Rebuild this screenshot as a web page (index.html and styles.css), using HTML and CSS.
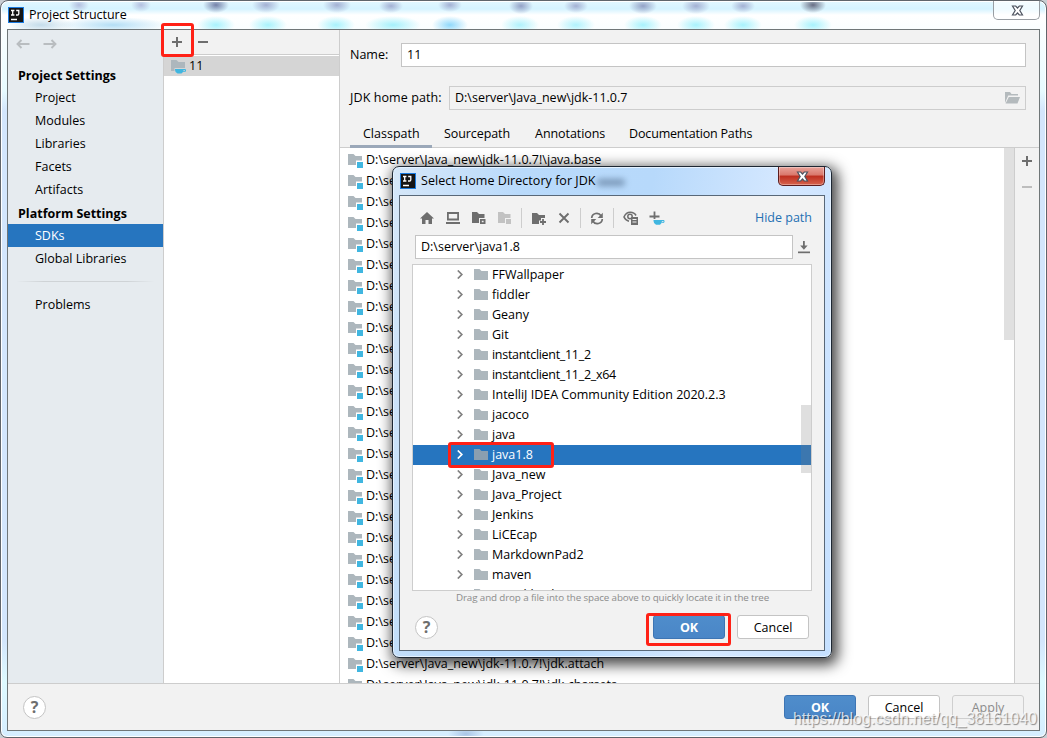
FILE: index.html
```html
<!DOCTYPE html>
<html lang="en">
<head>
<meta charset="utf-8">
<title>Project Structure</title>
<link rel="stylesheet" href="styles.css">
</head>
<body>
<svg class="defs" width="0" height="0">
  <symbol id="i-ij" viewBox="0 0 16 16"><rect width="16" height="16" fill="#1a7be0"/><rect x="1" y="1" width="14" height="14" fill="#151515"/><path d="M3 3.500h3.400M4.700 3.500v4.500M3 8h3.400M8.200 3.500h2.600v3.300q0 1.200-1.200 1.200H8M3 12.500h6" fill="none" stroke="#fff" stroke-width="1.300"/></symbol>
  <symbol id="i-back" viewBox="0 0 14 10"><path d="M13.500 5H1.500M5.500 1L1.500 5l4 4" fill="none" stroke="#b9bdc0" stroke-width="1.900"/></symbol>
  <symbol id="i-fwd" viewBox="0 0 14 10"><path d="M.5 5h12M8.500 1l4 4-4 4" fill="none" stroke="#b9bdc0" stroke-width="1.900"/></symbol>
  <symbol id="i-folder" viewBox="0 0 14 11"><path d="M0 0h5.500l2 2H14v9H0z"/></symbol>
  <symbol id="i-jar" viewBox="0 0 15 14"><path d="M0 0h5.500l2 2H14v4.500H8V11H0z" fill="#adb7bd"/><path d="M9 8h6v6H9z" fill="#40b6e0"/></symbol>
  <symbol id="i-sdk" viewBox="0 0 16 14"><path d="M0 0h5.500l2 2H14v6H3.500v3H0z" fill="#adb7bd"/><path d="M4 9h8.500v1q0 2.500-2 3.500H6.500Q4 12.500 4 10z" fill="#40b6e0"/><path d="M12 9.500h2.500v1.800H12" fill="none" stroke="#40b6e0"/></symbol>
  <symbol id="i-open" viewBox="0 0 15 12"><path d="M0 11V0h5l1.500 2H13v1.500H3.200z" fill="#b4babd"/><path d="M3.800 5H15l-2.500 6.500H.6z" fill="#b4babd"/></symbol>
  <symbol id="i-chev" viewBox="0 0 6 9"><path d="M.8.5l4 4-4 4" fill="none" stroke="currentColor" stroke-width="1.700"/></symbol>
  <symbol id="i-close" viewBox="0 0 13 11"><path d="M1.500 1h3.200l1.800 2 1.800-2h3.200L8.800 5.500l2.700 4.500H8.300L6.500 8 4.700 10H1.500l2.700-4.500z" fill="#fff" stroke="#4d535f" stroke-width="1.200"/></symbol>
</svg>
<div class="window">
  <header class="titlebar">
    <span class="title"><svg width="16" height="16"><use href="#i-ij"/></svg>Project Structure</span>
    <span class="close"><svg width="13" height="11"><use href="#i-close"/></svg></span>
  </header>
  <div class="frame">
    <div class="columns">
      <nav class="sidebar">
        <div class="history"><svg width="14" height="10"><use href="#i-back"/></svg><svg width="14" height="10"><use href="#i-fwd"/></svg></div>
        <h2 class="group">Project Settings</h2>
        <a class="item">Project</a><a class="item">Modules</a><a class="item">Libraries</a><a class="item">Facets</a><a class="item">Artifacts</a>
        <h2 class="group">Platform Settings</h2>
        <a class="item selected">SDKs</a><a class="item">Global Libraries</a>
        <div class="rule"></div>
        <a class="item">Problems</a>
      </nav>
      <section class="sdks">
        <div class="sdk-tools"><span class="plus"></span><span class="minus"></span><i class="mark mark-add"></i></div>
        <div class="sdk"><svg width="16" height="14"><use href="#i-sdk"/></svg>11</div>
      </section>
      <main class="detail">
        <div class="field-row name-row"><label>Name:</label><div class="input">11</div></div>
        <div class="field-row path-row"><label>JDK home path:</label><div class="input disabled"><span>D:\server\Java_new\jdk-11.0.7</span><svg width="15" height="12"><use href="#i-open"/></svg></div></div>
        <div class="tabs"><span class="tab active">Classpath</span><span class="tab">Sourcepath</span><span class="tab annotations">Annotations</span><span class="tab doc">Documentation Paths</span></div>
        <div class="roots">
          <div class="jars" id="jars"></div>
          <div class="track"><div class="thumb"></div></div>
          <div class="side-tools"><span class="plus"></span><span class="minus off"></span></div>
        </div>
      </main>
    </div>
    <footer class="footer"><span class="help">?</span><span class="btn primary">OK</span><span class="btn">Cancel</span><span class="btn off">Apply</span></footer>
  </div>
</div>

<div class="dialog">
  <header class="dialog-title">
    <span class="title"><svg width="16" height="16"><use href="#i-ij"/></svg>Select Home Directory for JDK</span><span class="ghost"></span>
    <span class="close red"><svg width="13" height="11"><use href="#i-close"/></svg></span>
  </header>
  <div class="dialog-body">
    <div class="tools">
      <svg width="14" height="12" viewBox="0 0 14 12"><path d="M7 0l7 6.500h-2V12H8.500V8h-3v4H2V6.500H0z" fill="#6e6e6e"/></svg>
      <svg class="g3" width="14" height="12" viewBox="0 0 14 12"><path d="M1.900 1h10.200v6.500H1.900z" fill="none" stroke="#6e6e6e" stroke-width="1.800"/><path d="M0 10h14v2H0z" fill="#6e6e6e"/></svg>
      <svg class="g3" width="14" height="12" viewBox="0 0 14 12"><path d="M0 0h5l2 2h5.500v4H7v5H0z" fill="#6e6e6e"/><path d="M8 7h5.500v5H8zm1.800 1.800v1.500h1.800V8.800z" fill="#6e6e6e" fill-rule="evenodd"/></svg>
      <svg class="g3" width="14" height="12" viewBox="0 0 14 12"><path d="M0 0h5l2 2h5.500v4H7v5H0z" fill="#c2c2c2"/><path d="M8 7h5v5H8z" fill="#c2c2c2"/></svg>
      <i class="sep"></i>
      <svg class="g1" width="15" height="13" viewBox="0 0 15 13"><path d="M0 1h5l2 2h6v3H9v2.500H7V12H0z" fill="#6e6e6e"/><path d="M11 7v6M8 10h6" stroke="#6e6e6e" stroke-width="1.800"/></svg>
      <svg class="g2" width="12" height="12" viewBox="0 0 12 12"><path d="M1.500 1.500l9 9m0-9l-9 9" stroke="#6e6e6e" stroke-width="1.900"/></svg>
      <i class="sep g1"></i>
      <svg width="14" height="13" viewBox="0 0 14 13"><path d="M1.700 6a5 5 0 0 1 9.300-2.200M12.300 7A5 5 0 0 1 3 9.200" fill="none" stroke="#6e6e6e" stroke-width="1.700"/><path d="M12.800.8V6H7.700zM1.200 12.200V7h5.100z" fill="#6e6e6e"/></svg>
      <i class="sep"></i>
      <svg width="16" height="14" viewBox="0 0 16 14"><path d="M6 10.200Q2.500 9.500 1 6 3 1.300 7.300 1.300q4 0 5.700 3.200" fill="none" stroke="#6e6e6e" stroke-width="1.600"/><circle cx="7" cy="5.500" r="2.200" fill="none" stroke="#6e6e6e" stroke-width="1.500"/><path d="M8 6h7v8H8z" fill="#6e6e6e"/><path d="M9.500 8.500h4m-4 2.500h4" stroke="#f2f2f2"/></svg>
      <svg class="g1" width="16" height="14" viewBox="0 0 16 14"><path d="M5.500.5v7.500M.5 5.500h10" stroke="#6e6e6e" stroke-width="1.800"/><path d="M4.500 9H13v1q0 2.500-2 3.700H7Q4.500 12.500 4.500 10z" fill="#40b6e0"/><path d="M12.500 9.500H15v1.800h-2.500" fill="none" stroke="#40b6e0"/></svg>
      <a class="hide">Hide path</a>
    </div>
    <div class="path"><div class="input">D:\server\java1.8</div><svg width="12" height="13" viewBox="0 0 12 13"><path d="M5.900 0v7" stroke="#6e6e6e" stroke-width="1.800"/><path d="M2.200 4.500h7.400L5.900 8.800z" fill="#6e6e6e"/><path d="M0 10.500h12v1.700H0z" fill="#6e6e6e"/></svg></div>
    <div class="tree"><div id="tree"></div><div class="tree-thumb"></div><i class="mark mark-java"></i></div>
    <p class="hint">Drag and drop a file into the space above to quickly locate it in the tree</p>
    <div class="actions"><span class="help">?</span><span class="btn primary">OK<i class="mark mark-ok"></i></span><span class="btn">Cancel</span></div>
  </div>
</div>
<div class="watermark">https://blog.csdn.net/qq_38161040</div>
<script src="app.js"></script>
</body>
</html>
```
FILE: styles.css
```css
* { box-sizing: border-box; }
body { margin: 0; width: 1047px; height: 738px; overflow: hidden; position: relative; background: #c9ced3; font: 12.5px/20px "Open Sans", "Noto Sans", sans-serif; color: #000; }
svg { display: block; flex: none; }
.defs { position: absolute; }

.window { width: 1047px; height: 738px; border: 1px solid #60656b; border-radius: 8px 8px 7px 7px; padding: 0 6px; box-shadow: inset 0 0 0 1px #fff;
  background:
    radial-gradient(ellipse 13px 8px at 215px 4px, #7481a8, transparent),
    radial-gradient(ellipse 10px 7px at 78px 4px, #b3bfdf, transparent),
    radial-gradient(ellipse 10px 7px at 140px 4px, #b3bfdf, transparent),
    radial-gradient(ellipse 14px 8px at 265px 4px, #a3b0d3, transparent),
    radial-gradient(ellipse 14px 8px at 336px 4px, #a3b0d3, transparent),
    radial-gradient(ellipse 12px 7px at 390px 5px, #a3b0d3, transparent),
    radial-gradient(ellipse 12px 7px at 449px 4px, #a3b0d3, transparent),
    radial-gradient(ellipse 12px 8px at 520px 5px, #93a1c6, transparent),
    radial-gradient(ellipse 12px 7px at 575px 5px, #a3b0d3, transparent),
    radial-gradient(ellipse 14px 8px at 642px 5px, #93a1c6, transparent),
    radial-gradient(ellipse 14px 8px at 695px 5px, #a3b0d3, transparent),
    radial-gradient(ellipse 12px 7px at 742px 5px, #a3b0d3, transparent),
    radial-gradient(ellipse 13px 8px at 812px 4px, #676d83, transparent),
    radial-gradient(ellipse 28px 9px at 392px 24px, #a5f0fb, transparent),
    radial-gradient(ellipse 18px 9px at 449px 24px, #90d9fb, transparent),
    radial-gradient(ellipse 19px 9px at 519px 24px, #b0f2fc, transparent),
    radial-gradient(ellipse 19px 9px at 575px 24px, #b0f2fc, transparent),
    radial-gradient(ellipse 19px 9px at 642px 24px, #a8f2fc, transparent),
    radial-gradient(ellipse 19px 9px at 695px 24px, #a8f2fc, transparent),
    radial-gradient(ellipse 19px 9px at 742px 24px, #a8f2fc, transparent),
    radial-gradient(ellipse 19px 9px at 812px 24px, #a8f2fc, transparent),
    radial-gradient(ellipse 34px 8px at 40px 24px, #c4dcea, transparent),
    radial-gradient(ellipse 55px 8px at 112px 24px, #b4def5, transparent),
    radial-gradient(ellipse 19px 9px at 215px 24px, #a8f2fc, transparent),
    radial-gradient(ellipse 19px 9px at 267px 24px, #a8f2fc, transparent),
    radial-gradient(ellipse 19px 9px at 335px 24px, #a8f2fc, transparent),
    radial-gradient(ellipse 18px 8px at 465px 733px, #a9c5e6, transparent),
    linear-gradient(#e2f7ff 0, #d5f3ff 8px, #fff 14px, #fafeff 28px, #e7fbff 90px, #d3e6fc 110px, #d3e6fc 640px, #defaff 680px, #d5edff 738px); }
.titlebar { display: flex; justify-content: space-between; height: 28px; padding: 0 1px; }
.title { display: flex; gap: 5px; align-items: center; height: 28px; letter-spacing: -.04px; }
.close { display: grid; place-items: center; width: 47px; height: 19px; border: 1px solid #999ea3; border-top: 0; border-radius: 0 0 5px 5px; background: #ffffffa0; margin-right: -1px; padding-left: 1px; }
.frame { display: flex; flex-direction: column; height: 702px; border: 1px solid #6f7678; background: #f2f2f2; }
.columns { display: grid; grid-template-columns: 156px 176px 1fr; grid-template-rows: 653px; flex: none; height: 654px; border-bottom: 1px solid #cdcdcd; }

.sidebar { background: #e6ebef; border-right: 1px solid #cdcdcd; }
.history { display: flex; gap: 13px; height: 33px; padding: 9px 8px; }
.group { margin: 0; height: 23px; padding-left: 10px; font-size: 12.5px; line-height: 25px; font-weight: 700; }
.item { display: block; height: 23px; padding-left: 27px; line-height: 23px; }
.selected { background: #2675bf; color: #fff; }
.rule { height: 1px; margin: 11px 8px; background: linear-gradient(90deg, transparent, #cfd3d6 20%, #cfd3d6 80%, transparent); }

.sdks { background: #fff; border-right: 1px solid #cdcdcd; }
.sdk-tools { position: relative; display: flex; gap: 16px; align-items: center; height: 25px; padding-left: 8px; background: #f2f2f2; border-bottom: 1px solid #cdcdcd; }
.plus, .minus { display: block; width: 10px; height: 10px; color: #6e6e6e; background: linear-gradient(currentColor, currentColor) 0 4px / 10px 2px no-repeat; }
.plus { background: linear-gradient(currentColor, currentColor) 0 4px / 10px 2px no-repeat, linear-gradient(currentColor, currentColor) 4px 0 / 2px 10px no-repeat; }
.minus.off { color: #bdbdbd; }
.sdk { display: flex; gap: 2px; align-items: center; height: 20px; margin-top: 1px; padding-left: 7px; background: #d5d5d5; }
.sdk svg { margin-top: 1px; }
.mark { position: absolute; border: 3px solid #ff2116; border-radius: 3px; }
.mark-add { left: -3px; top: -7px; width: 33px; height: 34px; }

.detail { display: flex; flex-direction: column; min-width: 0; min-height: 0; }
.field-row { display: flex; align-items: center; height: 24px; padding: 0 13px 0 10px; }
.name-row { margin-top: 13px; }
.name-row label { width: 51px; }
.path-row { margin-top: 19px; }
.path-row label { width: 99px; white-space: nowrap; letter-spacing: .1px; }
.input { display: flex; flex: 1; align-items: center; justify-content: space-between; height: 24px; padding: 0 5px; border: 1px solid #c4c4c4; background: #fff; }
.disabled { background: #f2f2f2; border-color: #cdcdcd; }
.tabs { display: flex; flex: none; height: 38px; padding-left: 10px; border-bottom: 1px solid #cdcdcd; }
.tab { height: 38px; padding: 4px 12px 0; line-height: 40px; letter-spacing: -.08px; }
.active { border-bottom: 3px solid #9ba8b9; width: 82px; padding-left: 13px; letter-spacing: 0; }
.annotations { padding-left: 13px; }
.doc { letter-spacing: -.18px; white-space: nowrap; }
.roots { display: grid; grid-template-columns: 1fr 10px 25px; grid-template-rows: 100%; flex: 1; min-height: 0; overflow: hidden; background: #fff; }
.jars { overflow: hidden; padding: 1px 0 0 8px; white-space: nowrap; letter-spacing: .02px; }
.jar { display: flex; gap: 3px; height: 21px; line-height: 21px; }
.jar svg { margin-top: 5px; }
.thumb { height: 192px; background: #e0e0e0; }
.side-tools { display: flex; flex-direction: column; gap: 16px; padding: 8px 7px; border-left: 1px solid #cdcdcd; background: #f2f2f2; }

.footer { display: flex; gap: 12px; align-items: center; height: 46px; padding: 0 15px; }
.help { display: grid; place-items: center; width: 23px; height: 23px; margin-right: auto; border: 1px solid #c4c4c4; border-radius: 50%; background: #fff; color: #6e6e6e; font-size: 16px; font-weight: 700; line-height: 20px; }
.btn { position: relative; width: 72px; height: 24px; border: 1px solid #c4c4c4; border-radius: 3px; background: #fff; text-align: center; line-height: 23px; }
.primary { border-color: #3d75b4; background: linear-gradient(#4f8dcb, #4a86c7); color: #fff; font-weight: 700; }
.btn.off { background: #f2f2f2; border-color: #cfcfcf; color: #8c8c8c; }

.dialog { position: absolute; left: 392px; top: 166px; width: 440px; height: 492px; border: 1px solid #1d2733; border-radius: 7px; padding: 0 6px; box-shadow: inset 0 0 0 1px #e5f2ff, 3px 4px 14px 3px #000000b8;
  background: linear-gradient(100deg, #d6e7f8 0, #b9dafb 25%, #b7d9fb 50%, #d5e8ff 75%, #c5e0ff); }
.dialog-title { position: relative; display: flex; height: 28px; padding-left: 1px; }
.dialog-title .title { letter-spacing: .04px; }
.ghost { width: 28px; height: 7px; margin: 12px 0 0 1px; border-radius: 3px; background: #46607f; filter: blur(3px); opacity: .55; }
.red { margin: 0 0 0 auto; border-color: #5c1c1e; background: linear-gradient(#e9a39a, #d9776b 45%, #bd2e1f 50%, #d7644e); box-shadow: inset 0 0 0 1px #ffffff55; }
.dialog-body { height: 456px; border: 1px solid #596878; padding: 0 12px; background: #f2f2f2; }
.tools { display: flex; align-items: center; gap: 9px; height: 39px; padding: 5px 0 0 8px; }
.tools .g1 { margin-left: 1px; }
.tools .g2 { margin-left: 2px; }
.tools .g3 { margin-left: 3px; }
.sep { width: 1px; height: 20px; background: #cdcdcd; }
.hide { margin-left: auto; color: #2470b3; }
.path { display: flex; gap: 5px; align-items: center; height: 24px; padding: 0 2px 0 3px; }
.tree { position: relative; height: 327px; margin-top: 5px; border: 1px solid #cdcdcd; background: #fff; }
#tree { height: 325px; overflow: hidden; }
.node { display: flex; align-items: center; height: 20px; padding-left: 44px; color: #000; white-space: nowrap; }
.node svg { margin-bottom: 1px; }
.node .chev { color: #808080; margin-right: 11px; }
.node .fold { fill: #adb7bd; margin-right: 4px; }
.node.tight { letter-spacing: -.3px; }
.node.selected { background: #2675bf; color: #fff; }
.node.selected .chev { color: #fff; }
.node.selected .fold { fill: #8a9fb0; }
.tree-thumb { position: absolute; right: 0; top: 140px; width: 10px; height: 68px; background: #80808040; }
.mark-java { left: 35px; top: 177px; width: 106px; height: 26px; }
.hint { margin: 0 0 0 44px; height: 14px; line-height: 14px; font-size: 9.8px; letter-spacing: -.12px; color: #8c8c8c; white-space: nowrap; }
.actions { display: flex; gap: 12px; align-items: center; height: 24px; margin-top: 10px; padding: 0 3px; }
.mark-ok { left: -8px; top: -3px; width: 85px; height: 33px; }
.watermark { position: absolute; left: 793px; top: 709px; font: 15.9px/20px "Liberation Sans", sans-serif; color: #ffffffc0; text-shadow: 1px 1px 1px #00000070; white-space: nowrap; }
```
FILE: app.js
```js
const modules = ["java.base", "java.compiler", "java.datatransfer", "java.desktop", "java.instrument", "java.logging", "java.management", "java.management.rmi", "java.naming", "java.net.http", "java.prefs", "java.rmi", "java.scripting", "java.se", "java.security.jgss", "java.security.sasl", "java.smartcardio", "java.sql", "java.sql.rowset", "java.transaction.xa", "java.xml", "java.xml.crypto", "java.xml", "jdk.accessibility", "jdk.attach", "jdk.charsets"];
document.getElementById("jars").innerHTML = modules.map(m =>
  `<div class="jar"><svg width="15" height="14"><use href="#i-jar"/></svg><span>D:\\server\\Java_new\\jdk-11.0.7!\\${m}</span></div>`).join("");

const folders = ["FFWallpaper", "fiddler", "Geany", "Git", "instantclient_11_2", "instantclient_11_2_x64", "IntelliJ IDEA Community Edition 2020.2.3", "jacoco", "java", "java1.8", "Java_new", "Java_Project", "Jenkins", "LiCEcap", "MarkdownPad2", "maven", "mysql-backup"];
document.getElementById("tree").innerHTML = folders.map(f =>
  `<div class="node${f === "java1.8" ? " selected" : ""}${f.startsWith("instant") ? " tight" : ""}"><svg class="chev" width="6" height="9"><use href="#i-chev"/></svg><svg class="fold" width="14" height="11"><use href="#i-folder"/></svg><span>${f}</span></div>`).join("");
```
